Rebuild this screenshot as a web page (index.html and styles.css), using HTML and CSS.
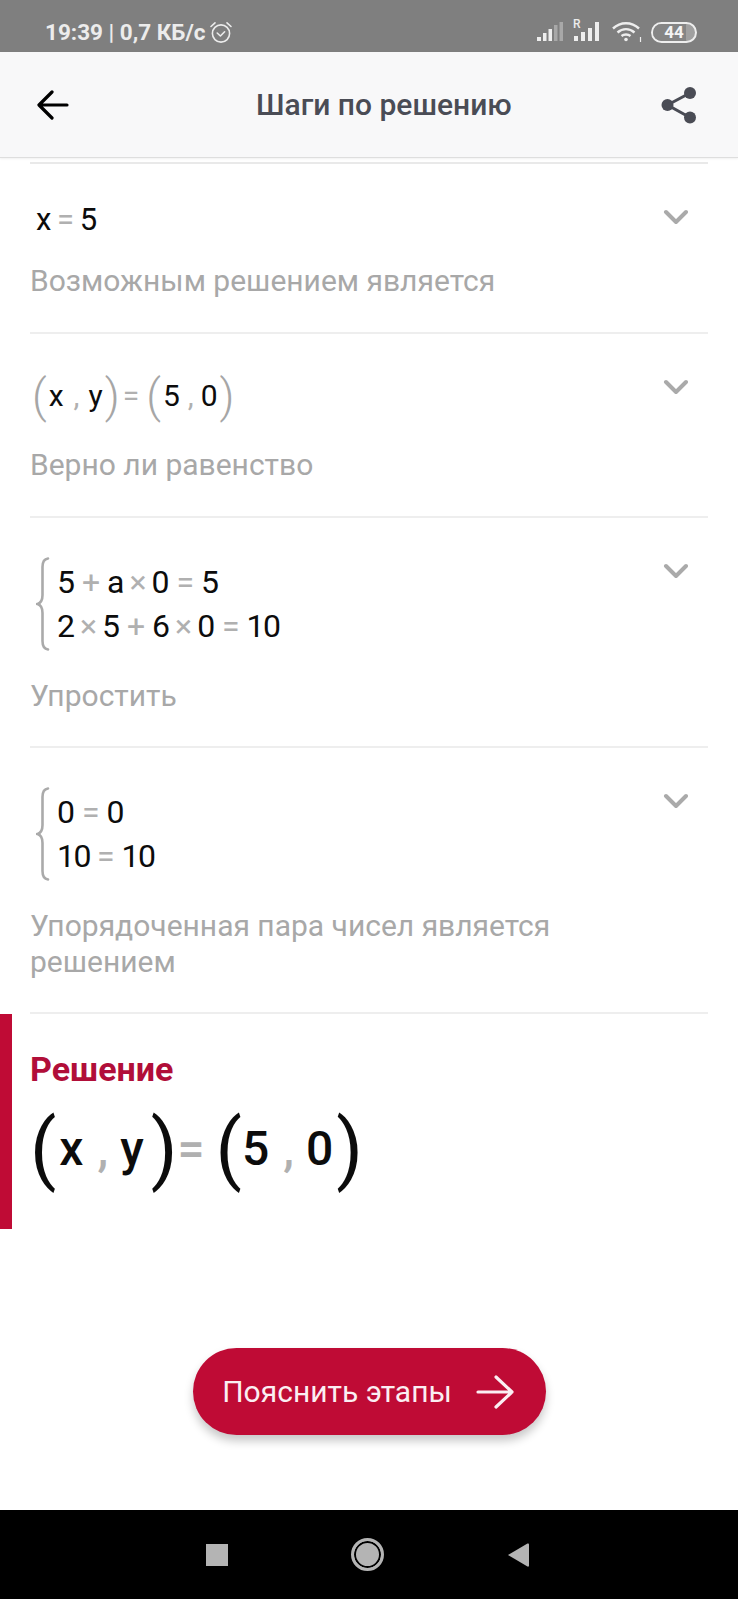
FILE: index.html
```html
<!DOCTYPE html>
<html lang="ru">
<head>
<meta charset="utf-8">
<title>Шаги по решению</title>
<link rel="stylesheet" href="styles.css">
</head>
<body>
<div class="page">
  <div class="status">
    <span class="status-text">19:39 | 0,7 КБ/с</span>
    <svg class="alarm" width="24" height="24" viewBox="0 0 24 24" fill="none" stroke="#ececec" stroke-width="1.6" stroke-linecap="round" stroke-linejoin="round"><circle cx="12" cy="13.5" r="8.6"/><path d="M8.2 13l3.2 3 4.2-4.2"/><path d="M2 6.5L6 2.8M22 6.5L18 2.8"/></svg>
    <span class="status-right">
      <svg width="27" height="20" viewBox="0 0 27 20"><rect x="0" y="15" width="4" height="4" fill="#eee"/><rect x="6" y="11" width="3.500" height="8" fill="#eee"/><rect x="11.500" y="7" width="3.500" height="12" fill="#eee"/><rect x="17" y="3" width="3.500" height="16" fill="#a8a8a8"/><rect x="22.500" y="0" width="3.500" height="19" fill="#a8a8a8"/></svg>
      <span class="sim"><span class="sim-r">R</span><svg width="28" height="20" viewBox="0 0 28 20"><rect x="1" y="14" width="4" height="5" fill="#eee"/><rect x="8" y="10" width="4" height="9" fill="#eee"/><rect x="15" y="6" width="4" height="13" fill="#eee"/><rect x="22" y="0" width="4" height="19" fill="#eee"/></svg></span>
      <svg class="wifi" width="30" height="22" viewBox="0 0 30 22" fill="none" stroke="#eee" stroke-width="2.400"><path d="M1 7.500C8.500 .5 19.500 .5 27 7.500"/><path d="M5.500 11.500C10.500 7 17.500 7 22.500 11.500"/><path d="M9.500 15C12 13 16 13 18.500 15"/><circle cx="14" cy="18.500" r="1.800" fill="#eee" stroke="none"/><path d="M28.500 16v5" stroke-width="1.200"/></svg>
      <span class="battery"><span class="battery-fill"></span><span class="battery-num">44</span></span>
    </span>
  </div>

  <header class="topbar">
    <svg class="back" width="32" height="30" viewBox="0 0 32 30" fill="none" stroke="#000" stroke-width="3.200" stroke-linecap="round" stroke-linejoin="round"><path d="M30 15H3M15 2L2 15l13 13"/></svg>
    <h1 class="title">Шаги по решению</h1>
    <svg class="share" width="36" height="38" viewBox="0 0 36 38" fill="#4a4c55"><circle cx="29" cy="7" r="6"/><circle cx="6.500" cy="19" r="6"/><circle cx="29" cy="31.500" r="6"/><path d="M29 7L6.500 19 29 31.500" fill="none" stroke="#4a4c55" stroke-width="3"/></svg>
  </header>

  <main class="steps">
    <section class="row row-first">
      <div class="content">
        <div class="math line-one"><span>x</span> <span class="op">=</span> <span>5</span></div>
        <p class="hint hint-one">Возможным решением является</p>
      </div>
      <svg class="chev" width="26" height="16" viewBox="0 0 26 16" fill="none" stroke="#aaa" stroke-width="4" stroke-linecap="round" stroke-linejoin="round"><path d="M4 3l10 10L24 3"/></svg>
    </section>

    <section class="row row-pair">
      <div class="content">
        <div class="math pair"><span class="paren">(</span><span class="tok">x</span><span class="op comma comma-wide">,</span><span class="tok">y</span><span class="paren">)</span><span class="op eq">=</span><span class="paren">(</span><span class="tok">5</span><span class="op comma comma-tight">,</span><span class="tok">0</span><span class="paren">)</span></div>
        <p class="hint hint-pair">Верно ли равенство</p>
      </div>
      <svg class="chev" width="26" height="16" viewBox="0 0 26 16" fill="none" stroke="#aaa" stroke-width="4" stroke-linecap="round" stroke-linejoin="round"><path d="M4 3l10 10L24 3"/></svg>
    </section>

    <section class="row row-sys">
      <div class="content">
        <div class="system">
          <svg class="brace" width="14" height="94" viewBox="0 0 14 94" fill="none" stroke="#aaa" stroke-width="2.600" stroke-linecap="round"><path d="M12 1.500C8 2 6.500 5 6.500 10V38C6.500 43 5 46 1.500 47C5 48 6.500 51 6.500 56V84C6.500 89 8 92 12 92.500"/></svg>
          <div class="eqs">
            <div class="math">5 <span class="op">+</span> a<span class="op times">×</span>0 <span class="op">=</span> 5</div>
            <div class="math">2<span class="op times">×</span>5 <span class="op">+</span> 6<span class="op times">×</span>0 <span class="op">=</span> <span class="tens">10</span></div>
          </div>
        </div>
        <p class="hint hint-sys">Упростить</p>
      </div>
      <svg class="chev" width="26" height="16" viewBox="0 0 26 16" fill="none" stroke="#aaa" stroke-width="4" stroke-linecap="round" stroke-linejoin="round"><path d="M4 3l10 10L24 3"/></svg>
    </section>

    <section class="row row-sys">
      <div class="content">
        <div class="system">
          <svg class="brace" width="14" height="94" viewBox="0 0 14 94" fill="none" stroke="#aaa" stroke-width="2.600" stroke-linecap="round"><path d="M12 1.500C8 2 6.500 5 6.500 10V38C6.500 43 5 46 1.500 47C5 48 6.500 51 6.500 56V84C6.500 89 8 92 12 92.500"/></svg>
          <div class="eqs">
            <div class="math">0 <span class="op">=</span> 0</div>
            <div class="math"><span class="tens">10</span> <span class="op">=</span> <span class="tens">10</span></div>
          </div>
        </div>
        <p class="hint hint-sys">Упорядоченная пара чисел является решением</p>
      </div>
      <svg class="chev" width="26" height="16" viewBox="0 0 26 16" fill="none" stroke="#aaa" stroke-width="4" stroke-linecap="round" stroke-linejoin="round"><path d="M4 3l10 10L24 3"/></svg>
    </section>
  </main>

  <section class="solution">
    <h2 class="sol-title">Решение</h2>
    <div class="math sol-math"><span class="paren">(</span><span class="tok">x</span><span class="op comma">,</span><span class="tok">y</span><span class="paren">)</span><span class="op eq">=</span><span class="paren">(</span><span class="tok">5</span><span class="op comma">,</span><span class="tok">0</span><span class="paren">)</span></div>
  </section>

  <div class="action">
    <button class="explain" type="button">
      <span>Пояснить этапы</span>
      <svg width="38" height="34" viewBox="0 0 38 34" fill="none" stroke="#fbeef2" stroke-width="3.200" stroke-linecap="round" stroke-linejoin="round"><path d="M2 17h34M20 2l16 15-16 15"/></svg>
    </button>
  </div>

  <nav class="navbar">
    <span class="nav-square"></span>
    <span class="nav-circle"></span>
    <svg width="22" height="26" viewBox="0 0 22 26"><path d="M1 13L20.500 1.500Q22 1 22 2.500V23.500Q22 25 20.500 24.500Z" fill="#b4b4b4"/></svg>
  </nav>
</div>
</body>
</html>
```
FILE: styles.css
```css
* { box-sizing: border-box; }
html, body { margin: 0; padding: 0; background: #fff; }
body { font-family: Roboto, "Liberation Sans", sans-serif; }
.page { width: 738px; height: 1599px; display: flex; flex-direction: column; overflow: hidden; }

.status { height: 52px; flex: none; background: #7f7f7f; display: flex; align-items: center; padding: 12px 41px 0 45px; color: #ececec; }
.status-text { font-size: 22.5px; font-weight: 700; white-space: nowrap; }
.alarm { margin-left: 4px; }
.status-right { margin-left: auto; display: flex; align-items: center; gap: 9px; }
.sim { position: relative; display: block; height: 20px; width: 28px; margin-right: 2px; }
.sim-r { position: absolute; left: 0; top: -3px; font-size: 12px; line-height: 10px; font-weight: 500; }
.battery { position: relative; width: 46px; height: 21px; border: 2px solid #eee; border-radius: 11px; display: flex; align-items: center; justify-content: center; overflow: hidden; background: #a0a0a0; }
.battery-fill { position: absolute; left: 0; top: 0; bottom: 0; width: 78%; background: #858585; }
.battery-num { position: relative; font-size: 17px; font-weight: 700; color: #f4f4f4; line-height: 1; }

.topbar { height: 106px; flex: none; background: #f8f8f9; border-bottom: 1px solid #dedede; box-shadow: 0 1px 2px rgba(0,0,0,.06); display: flex; align-items: center; padding: 0 41px 0 37px; }
.back { flex: none; }
.title { margin: 0 0 0 187px; font-size: 30px; font-weight: 500; color: #4a4c55; white-space: nowrap; line-height: 1; }
.share { margin-left: auto; flex: none; }

.steps { margin: 4px 30px 0; border-top: 2px solid #e9e9e9; flex: none; }
.row { display: flex; align-items: flex-start; justify-content: space-between; border-bottom: 2px solid #eeeeee; }
.content { flex: 1; min-width: 0; }
.chev { flex: none; margin: 45px 20px 0 0; }
.row-first { height: 170px; }
.row-pair { height: 184px; }
.row-sys { height: auto; }

.math { font-size: 32px; color: #0c0c0c; line-height: 44px; white-space: nowrap; word-spacing: -1px; }
.tens { letter-spacing: -1.5px; }
.op { color: #b0b0b0; }
.line-one { font-size: 31px; line-height: 45px; padding: 33px 0 0 6px; word-spacing: -2px; }
.hint { margin: 0; font-size: 30px; line-height: 36px; color: #a8a8a8; }
.hint-one { margin-top: 21px; }

.pair { display: flex; align-items: center; height: 60px; margin-top: 32px; padding-left: 2px; font-size: 30px; }
.pair .paren { font-size: 46px; font-weight: 300; color: #a6a6a6; line-height: 60px; }
.pair .tok { margin: 0 2px; }
.pair .comma-wide { margin: 0 7px 0 8px; }
.pair .comma-tight { margin: 0 5px 0 6px; }
.pair .eq { margin: 0 7px 0 3px; }
.hint-pair { margin-top: 21px; }

.system { display: flex; align-items: center; padding: 39px 0 0 6px; }
.brace { flex: none; }
.eqs { margin-left: 7px; }
.times { margin: 0 5px; }
.hint-sys { margin-top: 27px; padding-bottom: 32px; width: 620px; }

.solution { flex: none; height: 215px; border-left: 12px solid #bf0b35; padding: 35px 0 0 18px; }
.sol-title { margin: 0; font-size: 34px; line-height: 40px; font-weight: 700; color: #b10e39; }
.sol-math { display: flex; align-items: center; font-size: 48px; font-weight: 500; height: 90px; margin-top: 15px; line-height: 90px; }
.sol-math .paren { font-size: 77px; font-weight: 400; }
.sol-math .tok { margin: 0 5px 0 3px; }
.sol-math .comma { margin: 0 9px; }
.sol-math .eq { margin: 0 11px 0 0; }
.sol-math .tok + .paren { margin-left: 2px; }
.sol-math .paren:last-child { margin-left: -2px; }
.sol-math .eq + .paren + .tok { margin-left: 0; }

.action { flex: 1; display: flex; justify-content: center; padding: 119px 0 0 0; }
.explain { width: 353px; height: 87px; border: 0; border-radius: 44px; background: #bf0b35; color: #fbeef2; font-family: inherit; font-size: 30px; display: flex; align-items: center; justify-content: center; gap: 24px; padding: 0 2px 0 0; box-shadow: 0 6px 10px rgba(0,0,0,.22); }

.navbar { height: 89px; flex: none; background: #000; display: flex; align-items: center; justify-content: center; padding-right: 4px; gap: 123px; }
.nav-square { width: 22px; height: 22px; background: #b4b4b4; }
.nav-circle { width: 33px; height: 33px; border-radius: 50%; background: #b4b4b4; border: 3px solid #b4b4b4; box-shadow: inset 0 0 0 2px #000; }
```
